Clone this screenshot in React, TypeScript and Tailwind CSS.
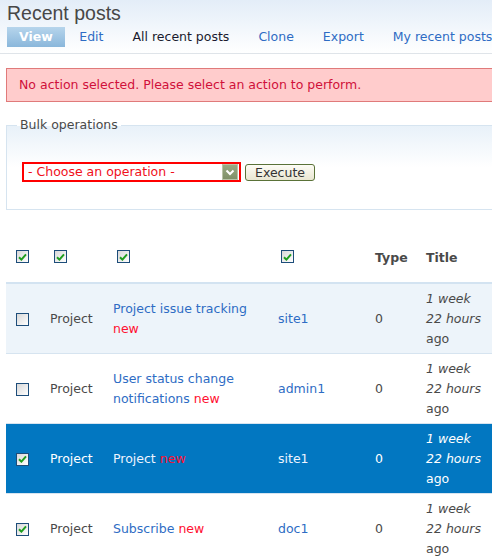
import React from "react";

const font = { fontFamily: '"DejaVu Sans", Verdana, sans-serif' };

function Box({ checked = false, className = "" }: { checked?: boolean; className?: string }) {
  return (
    <span
      className={
        "inline-flex h-[13px] w-[13px] items-center justify-center border border-[#1d4d7a] bg-gradient-to-br from-[#d8d8d8] to-white align-middle " +
        className
      }
    >
      {checked && (
        <svg width="9" height="8" viewBox="0 0 9 8">
          <path d="M1 4.2 L3.4 6.6 L8 1.4" fill="none" stroke="#1f9e1f" strokeWidth="2" />
        </svg>
      )}
    </span>
  );
}

type Row = {
  title: string;
  author: string;
  checked: boolean;
  bg: string;
  selected?: boolean;
};

const rows: Row[] = [
  { title: "Project issue tracking", author: "site1", checked: false, bg: "bg-[#edf4fa]" },
  { title: "User status change notifications", author: "admin1", checked: false, bg: "bg-white" },
  { title: "Project", author: "site1", checked: true, bg: "bg-[#0277c1]", selected: true },
  { title: "Subscribe", author: "doc1", checked: true, bg: "bg-white" },
];

const tabs = ["Edit", "All recent posts", "Clone", "Export", "My recent posts"];

export default function App() {
  return (
    <div className="w-[492px] h-[558px] overflow-hidden bg-white text-[12.5px] text-[#494949]" style={font}>
      <div className="w-[560px]">
        {/* header */}
        <div className="bg-gradient-to-b from-[#e3edf8] to-white border-b border-[#dfe4e9] pb-[6px]">
          <h1
            className="pl-[7px] pt-[1px] text-[19.5px] leading-[24px] text-[#474747] font-normal"
            style={{ fontFamily: '"Liberation Sans", Arial, sans-serif' }}
          >
            Recent posts
          </h1>
          <ul className="mt-[2px] flex pl-[7px] leading-[20px]">
            <li className="h-[20px] px-[12px] bg-gradient-to-b from-[#b6d5ec] to-[#8ab7db] font-bold text-white">
              View
            </li>
            {tabs.map((t) => (
              <li
                key={t}
                className={
                  "px-[14.5px] first:pl-[17px] " +
                  (t === "All recent posts" ? "text-[#1a1a2e]" : "text-[#2e6cc4]")
                }
              >
                {t}
              </li>
            ))}
          </ul>
        </div>

        <div className="pl-[6px]">
          {/* error */}
          <div className="mt-[14px] h-[34px] flex items-center border border-[#e07a7a] bg-[#ffcccc] pl-[12px] text-[#d0103a]">
            No action selected. Please select an action to perform.
          </div>

          {/* bulk operations */}
          <fieldset className="mt-[15px] border border-[#d6e4f0] bg-gradient-to-b from-[#e8f1f9] via-white to-white p-0">
            <legend className="ml-[10px] px-[3px] leading-[16px] text-[#494949]">Bulk operations</legend>
            <div className="flex items-center pl-[15px] pt-[29px] pb-[27px]">
              <div className="flex h-[20px] w-[219px] items-center justify-between border-2 border-[#ff0000] bg-white pl-[4px] pr-[1px] text-[#f0101a]">
                <span className="pt-[1px]">- Choose an operation -</span>
                <span className="flex h-[16px] w-[16px] items-center justify-center border border-[#b9c4a8] bg-gradient-to-b from-[#9aab84] to-[#7f9068]">
                  <svg width="10" height="7" viewBox="0 0 10 7">
                    <path d="M1.5 1.5 L5 5 L8.5 1.5" fill="none" stroke="white" strokeWidth="2" />
                  </svg>
                </span>
              </div>
              <button className="ml-[4px] h-[17px] w-[70px] rounded-[3px] border border-[#5a7238] bg-gradient-to-b from-[#fdfcf5] to-[#e9e6d2] text-[12.5px] leading-[15px] text-[#333]">
                Execute
              </button>
            </div>
          </fieldset>

          {/* table */}
          <table className="mt-[24px] w-[490px] table-fixed border-collapse">
            <colgroup>
              <col className="w-[34px]" />
              <col className="w-[63px]" />
              <col className="w-[165px]" />
              <col className="w-[97px]" />
              <col className="w-[51px]" />
              <col className="w-[80px]" />
            </colgroup>
            <thead>
              <tr className="h-[49px] border-b-2 border-[#d3e3f1]">
                <th className="pl-[10px] pb-[3px] text-left align-middle">
                  <Box checked />
                </th>
                <th className="pl-[14px] pb-[3px] text-left align-middle">
                  <Box checked />
                </th>
                <th className="pl-[14px] pb-[3px] text-left align-middle">
                  <Box checked />
                </th>
                <th className="pl-[13px] pb-[3px] text-left align-middle">
                  <Box checked />
                </th>
                <th className="pl-[10px] text-left align-middle font-bold">Type</th>
                <th className="pl-[10px] text-left align-middle font-bold">Title</th>
              </tr>
            </thead>
            <tbody>
              {rows.map((r, i) => {
                const sel = r.selected;
                const link = sel ? "text-[#eef4ff]" : "text-[#2e6cc4]";
                return (
                  <tr key={i} className={r.bg + " border-b border-[#d6e4f0] leading-[20px]"}>
                    <td className="pl-[10px] align-middle">
                      <Box checked={r.checked} />
                    </td>
                    <td className={"pl-[10px] align-middle " + (sel ? "text-white" : "")}>Project</td>
                    <td className="pl-[10px] pr-[10px] align-middle">
                      <span className={link}>{r.title}</span> <span className="text-[#ff1030]">new</span>
                    </td>
                    <td className={"pl-[10px] align-middle " + link}>{r.author}</td>
                    <td className={"pl-[10px] align-middle " + (sel ? "text-white" : "")}>0</td>
                    <td className={"pl-[10px] pr-[10px] pt-[5px] pb-[4px] align-middle " + (sel ? "text-white" : "")}>
                      <div className="w-[60px]">
                        <em className="italic">1 week 22 hours</em> ago
                      </div>
                    </td>
                  </tr>
                );
              })}
            </tbody>
          </table>
        </div>
      </div>
    </div>
  );
}
